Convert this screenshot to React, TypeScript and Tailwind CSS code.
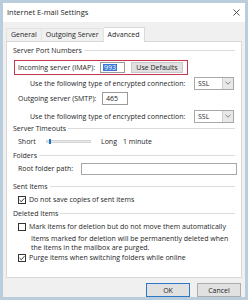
import React from 'react';

function SectionHeader({ title, className = '' }: { title: string; className?: string }) {
  return (
    <div className={`flex items-center h-[12px] pl-[6px] pr-[6px] gap-[2px] ${className}`}>
      <span className="whitespace-nowrap">{title}</span>
      <div className="flex-1 h-px bg-[#dcdcdc]" />
    </div>
  );
}

function Checkbox({ checked }: { checked: boolean }) {
  return (
    <div className="w-[8px] h-[8px] border border-[#333] bg-white flex items-center justify-center shrink-0">
      {checked && (
        <svg width="6" height="6" viewBox="0 0 6 6">
          <path d="M0.6 3.1 L2.3 4.7 L5.4 1.2" fill="none" stroke="#222" strokeWidth="0.9" />
        </svg>
      )}
    </div>
  );
}

function SelectBox() {
  return (
    <div className="w-[40px] h-[13px] border border-[#a8a8a8] bg-white flex items-center">
      <span className="pl-[3px] flex-1">SSL</span>
      <div className="w-[11px] h-full bg-[#e8e8e8] border-l border-[#cfcfcf] flex items-center justify-center">
        <svg width="6" height="4" viewBox="0 0 6 4">
          <path d="M0.5 0.8 L3 3.2 L5.5 0.8" fill="none" stroke="#666" strokeWidth="0.8" />
        </svg>
      </div>
    </div>
  );
}

export default function App() {
  return (
    <div
      className="w-[248px] h-[300px] bg-[#b9cddd] pt-[3px] px-[3px] pb-[3px] text-[7px] leading-[9px] text-[#262626] overflow-hidden"
      style={{ fontFamily: '"Open Sans", "Noto Sans", sans-serif' }}
    >
      <div className="w-[242px] h-[294px] flex flex-col bg-[#f0f0f0]">
        {/* title bar */}
        <div className="h-[19px] bg-white flex items-center justify-between pl-[4px] pr-[5px]">
          <span className="text-[7.5px]">Internet E-mail Settings</span>
          <svg width="7" height="7" viewBox="0 0 7 7">
            <path d="M0.5 0.5 L6.5 6.5 M6.5 0.5 L0.5 6.5" stroke="#444" strokeWidth="0.9" />
          </svg>
        </div>

        {/* tabs */}
        <div className="flex items-end h-[18px] pl-[3px] mt-px">
          <div className="h-[13px] px-[4px] flex items-center border border-b-0 border-[#e3e3e3]">General</div>
          <div className="h-[13px] px-[4px] flex items-center border border-b-0 border-l-0 border-[#e3e3e3]">Outgoing Server</div>
          <div className="h-[15px] px-[4px] flex items-center bg-white border border-b-0 border-l-0 border-[#d9d9d9] relative top-px">Advanced</div>
        </div>

        {/* panel */}
        <div className="ml-[3px] w-[236px] h-[238px] bg-white border border-[#d9d9d9] flex flex-col pt-[3px]">
          <SectionHeader title="Server Port Numbers" />

          <div className="mt-[3px] ml-[7px] w-[174px] h-[15px] border-[1.5px] border-[#c5384e] flex items-center pl-[3px]">
            <span className="w-[82px]">Incoming server (IMAP):</span>
            <div className="w-[25px] h-[11px] border border-[#9a9a9a] flex items-center pl-[2px]">
              <span className="bg-[#3a78d8] text-white leading-[7px] px-px">993</span>
            </div>
            <div className="ml-[6px] w-[52px] h-[11px] bg-[#e1e1e1] border border-[#c8c8c8] flex items-center justify-center">
              Use Defaults
            </div>
          </div>

          <div className="mt-[2px] h-[13px] flex items-center pl-[23px]">
            <span className="w-[164px]">Use the following type of encrypted connection:</span>
            <SelectBox />
          </div>

          <div className="mt-[2px] h-[13px] flex items-center pl-[11px]">
            <span className="w-[84px]">Outgoing server (SMTP):</span>
            <div className="w-[26px] h-[13px] border border-[#9a9a9a] flex items-center pl-[3px]">465</div>
          </div>

          <div className="mt-[5px] h-[13px] flex items-center pl-[23px]">
            <span className="w-[164px]">Use the following type of encrypted connection:</span>
            <SelectBox />
          </div>

          <SectionHeader title="Server Timeouts" />

          <div className="mt-px h-[12px] flex items-center pl-[11px]">
            <span className="w-[28px]">Short</span>
            <div className="w-[45px] h-[3px] bg-[#e6e6e6] border border-[#d6d6d6] flex items-center">
              <div className="ml-[2px] w-[2px] h-[5px] bg-[#1f6fd0]" />
            </div>
            <span className="ml-[10px]">Long</span>
            <span className="ml-[6px]">1 minute</span>
          </div>

          <SectionHeader title="Folders" className="mt-[2px]" />

          <div className="mt-px h-[12px] flex items-center pl-[11px]">
            <span className="w-[63px]">Root folder path:</span>
            <div className="w-[156px] h-[12px] border border-[#a8a8a8] bg-white" />
          </div>

          <SectionHeader title="Sent Items" className="mt-[6px]" />

          <div className="mt-px h-[12px] flex items-center pl-[11px] gap-[3px]">
            <Checkbox checked />
            <span>Do not save copies of sent items</span>
          </div>

          <SectionHeader title="Deleted Items" className="mt-[2px]" />

          <div className="mt-px h-[12px] flex items-center pl-[11px] gap-[3px]">
            <Checkbox checked={false} />
            <span>Mark items for deletion but do not move them automatically</span>
          </div>

          <div className="mt-px pl-[24px] leading-[9px]">
            <div>Items marked for deletion will be permanently deleted when</div>
            <div>the items in the mailbox are purged.</div>
          </div>

          <div className="h-[12px] flex items-center pl-[11px] gap-[3px]">
            <Checkbox checked />
            <span>Purge items when switching folders while online</span>
          </div>
        </div>

        {/* buttons */}
        <div className="mt-[5px] flex justify-end gap-[7px] pr-[4px]">
          <div className="w-[44px] h-[14px] bg-[#e1e1e1] border border-[#2a78c9] flex items-center justify-center">OK</div>
          <div className="w-[44px] h-[14px] bg-[#e1e1e1] border border-[#adadad] flex items-center justify-center">Cancel</div>
        </div>
      </div>
    </div>
  );
}
